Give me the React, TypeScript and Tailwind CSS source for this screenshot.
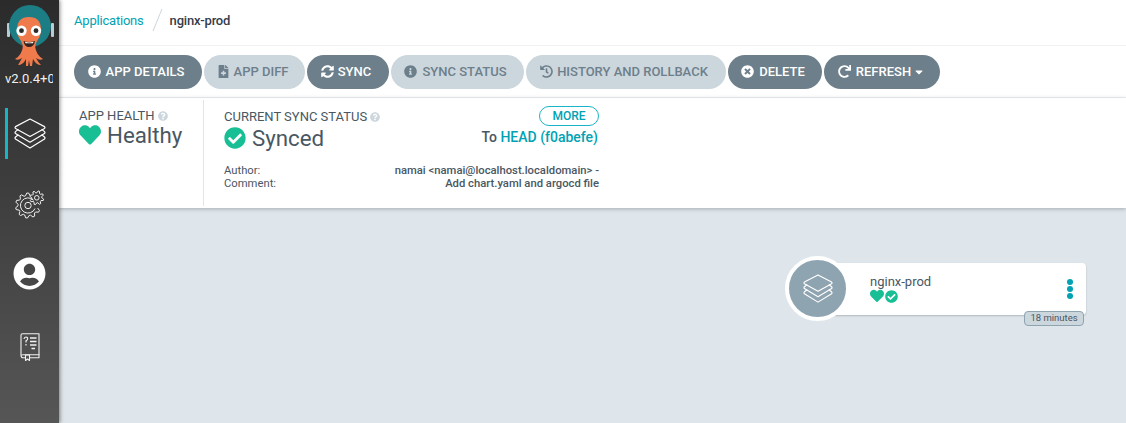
import { FaCaretDown, FaCheckCircle, FaFileMedical, FaHeart, FaHistory, FaInfoCircle, FaQuestionCircle, FaRedo, FaSyncAlt, FaTimesCircle, FaUserCircle } from "react-icons/fa";
import type { IconType } from "react-icons";

function Layers({ className }: { className?: string }) {
  return (
    <svg viewBox="-1 -1 32 32" fill="none" stroke="currentColor" strokeWidth="1.2" strokeLinejoin="round" strokeLinecap="round" className={className}>
      <path d="M15 0 L29.5 7.6 Q30.4 8.5 29.5 9.4 L15 17.5 L0.5 9.4 Q-0.4 8.5 0.5 7.6 Z" />
      <path d="M3 10.6 L0.5 12.6 Q-0.4 13.6 0.5 14.5 L15 23.2 L29.5 14.5 Q30.4 13.6 29.5 12.6 L27 10.6" />
      <path d="M3 16 L0.5 18 Q-0.4 19 0.5 20 L15 29 L29.5 20 Q30.4 19 29.5 18 L27 16" />
    </svg>
  );
}

// teeth outline for the settings icon, start/end in degrees so the big gear can stay open by the small one
function gearPath(cx: number, cy: number, outer: number, inner: number, teeth: number, start: number, end: number) {
  const pts: string[] = [];
  const step = (end - start) / teeth;
  for (let i = 0; i < teeth; i++) {
    const a = start + i * step;
    const offsets: [number, number][] = [[0, inner], [0.25, outer], [0.5, outer], [0.75, inner]];
    for (const [o, r] of offsets) {
      const t = ((a + o * step) * Math.PI) / 180;
      pts.push(`${(cx + r * Math.cos(t)).toFixed(2)} ${(cy + r * Math.sin(t)).toFixed(2)}`);
    }
  }
  return "M" + pts.join(" L");
}

function Gears({ className }: { className?: string }) {
  return (
    <svg viewBox="0 0 30 30" fill="none" stroke="currentColor" strokeWidth="1" strokeLinejoin="round" className={className}>
      <path d={gearPath(13, 15.5, 12.5, 10, 8, 15, 290)} />
      <path d="M18.5 10.2 A7.6 7.6 0 1 0 20 18.5" />
      <circle cx="13" cy="15.5" r="3.2" />
      <path d={gearPath(21.8, 7.8, 7, 5, 8, 0, 360) + " Z"} />
      <circle cx="21.8" cy="7.8" r="2.3" />
    </svg>
  );
}

function Book({ className }: { className?: string }) {
  return (
    <svg viewBox="0 0 20 28" fill="none" stroke="currentColor" strokeWidth="1.1" strokeLinejoin="round" className={className}>
      <path d="M1 22 L1 2 Q1 0.7 2.5 0.7 L19 0.7 L19 22" />
      <path d="M1 22 Q1 24.8 3 24.8 L5.5 24.8 M9.5 24.8 L19 24.8 L19 21.8 L3 21.8 Q1 21.8 1 23" />
      <path d="M5.5 22 L9.5 22 L9.5 27.5 L7.5 26 L5.5 27.5 Z" />
      <path d="M10 5 L16.5 5 M10 8.5 L16.5 8.5 M10 12 L16.5 12 M11.5 15.5 L15 15.5" strokeWidth="1.3" />
      <path d="M4 6 Q4.2 4 6 4 Q7.8 4.2 7.6 6 Q7.4 7.2 6 7.9 L6 9.6 M6 11 L6 12.4" strokeWidth="1.2" />
    </svg>
  );
}

function Logo() {
  return (
    <svg viewBox="5 4 50 64" className="h-[64px] w-[50px]">
      <rect x="7" y="23" width="3" height="14" rx="1" fill="#b6ccd6" />
      <rect x="51" y="23" width="3" height="14" rx="1" fill="#b6ccd6" />
      <circle cx="30" cy="26" r="21" fill="#1c7d85" />
      <path d="M17 30 Q17 17 29 17 Q41 17 41 30 Q41 36 37 41 Q35 45 35 48 L23 48 Q23 45 21 41 Q17 36 17 30 Z" fill="#ef7b4d" />
      <path d="M23 46 Q22 55 15 59 Q18 61 22 58 Q20 62 18 65 Q23 65 26 59 L26 66 L28 66 L29 60 L30 66 L32 66 L33 59 Q36 65 41 65 Q38 62 36 58 Q40 61 43 59 Q36 55 35 46 Z" fill="#ef7b4d" />
      <circle cx="21.5" cy="30.7" r="5.2" fill="#fff" />
      <circle cx="36" cy="30.7" r="5.2" fill="#fff" />
      <circle cx="21.5" cy="30.7" r="2.4" fill="#2b2b2b" />
      <circle cx="36" cy="30.7" r="2.4" fill="#2b2b2b" />
      <path d="M23.5 41 Q29 43 35 41 Q34 47 29 47 Q24.5 47 23.5 41 Z" fill="#33221f" />
      <path d="M25 41.8 Q29 43 33.5 41.8 L33 43.3 L25.5 43.3 Z" fill="#fff" />
    </svg>
  );
}

const actions: { label: string; icon: IconType; disabled?: boolean; width: string; caret?: boolean; gap: string; pad: string }[] = [
  { label: "APP DETAILS", icon: FaInfoCircle, width: "w-[128px]", gap: "gap-[5px]", pad: "pr-[4px]" },
  { label: "APP DIFF", icon: FaFileMedical, disabled: true, width: "w-[101px]", gap: "gap-[4px]", pad: "pr-[4px]" },
  { label: "SYNC", icon: FaSyncAlt, width: "w-[82px]", gap: "gap-[4px]", pad: "pr-[4px]" },
  { label: "SYNC STATUS", icon: FaInfoCircle, disabled: true, width: "w-[133px]", gap: "gap-[5px]", pad: "pr-[4px]" },
  { label: "HISTORY AND ROLLBACK", icon: FaHistory, disabled: true, width: "w-[200px]", gap: "gap-[4px]", pad: "pr-[4px]" },
  { label: "DELETE", icon: FaTimesCircle, width: "w-[94px]", gap: "gap-[5px]", pad: "pr-[4px]" },
  { label: "REFRESH", icon: FaRedo, width: "w-[116px]", caret: true, gap: "gap-[5px]", pad: "pr-[1px]" },
];

export default function App() {
  return (
    <div className="flex h-[423px] w-[1126px] overflow-hidden bg-[#dee6eb] font-['Roboto',sans-serif] text-[#495763]">
      <aside className="relative z-20 flex w-[59px] shrink-0 flex-col items-center bg-gradient-to-b from-[#2b2b2b] to-[#565656] shadow-[1px_0_4px_rgba(0,0,0,0.45)]">
        <div className="mt-[4px] self-start ml-[5px]">
          <Logo />
        </div>
        <div className="mt-[3px] ml-[5px] h-[16px] w-[48px] self-start overflow-hidden whitespace-nowrap text-[13px] leading-[16px] text-[#f0f0f0]">
          v2.0.4+0abefe
        </div>
        <div className="relative mt-[21px] flex h-[51px] w-full items-center justify-center">
          <div className="absolute left-[5px] top-0 h-[51px] w-[3px] bg-[#18b5c7]" />
          <Layers className="h-[32px] w-[32px] text-white" />
        </div>
        <Gears className="mt-[31px] h-[30px] w-[30px] text-[#f1f1f1]" />
        <FaUserCircle className="mt-[37px] text-[33px] text-white" />
        <Book className="mt-[43px] h-[28px] w-[20px] text-[#f1f1f1]" />
      </aside>

      <main className="flex min-w-0 flex-1 flex-col">
        <header className="flex h-[46px] shrink-0 items-center border-b border-[#eef2f4] bg-white pb-[5px] pl-[15px]">
          <span className="text-[13px] leading-none tracking-[-0.2px] text-[#00a2b3]">Applications</span>
          <span className="ml-[13px] mr-[12px] h-[24px] w-px rotate-[22deg] bg-[#ccd6dd]" />
          <span className="text-[13px] font-medium leading-none tracking-[-0.2px] text-[#363c4a]">nginx-prod</span>
        </header>

        <div className="flex h-[52px] shrink-0 items-center gap-[2px] border-b border-[#eef2f4] bg-white pl-[15px]">
          {actions.map((a) => (
            <button
              key={a.label}
              className={`flex h-[34px] items-center justify-center rounded-[17px] text-[13px] font-medium ${a.pad} ${a.gap} ${a.width} ${
                a.disabled ? "bg-[#ccd6dd] text-[#6d7f8b]" : "bg-[#6d7f8b] text-white"
              }`}
            >
              <a.icon className="text-[13px]" />
              <span className="flex items-center gap-[2px]">
                {a.label}
                {a.caret && <FaCaretDown className="text-[12px]" />}
              </span>
            </button>
          ))}
        </div>

        <section className="relative z-10 flex h-[110px] shrink-0 bg-white shadow-[0_1px_4px_rgba(0,0,0,0.25)]">
          <div className="mt-[2px] h-[106px] w-[145px] border-r border-[#dee6eb] pl-[20px] pt-[8px]">
            <div className="flex items-center gap-[3px] text-[13px] leading-[16px] text-[#495763]">
              APP HEALTH
              <FaQuestionCircle className="text-[10px] text-[#ccd6dd]" />
            </div>
            <div className="-mt-[1px] flex items-center gap-[6px] text-[22.3px] leading-[24px]">
              <FaHeart className="text-[22px] text-[#18be94]" />
              Healthy
            </div>
          </div>
          <div className="w-[395px] pl-[20px] pt-[8px]">
            <div className="flex justify-between">
              <div className="flex items-center gap-[3px] pt-[1px] text-[13px] leading-[16px]">
                CURRENT SYNC STATUS
                <FaQuestionCircle className="text-[10px] text-[#ccd6dd]" />
              </div>
              <button className="h-[20px] w-[60px] rounded-[10px] border border-[#18b5c7] text-[12px] font-medium leading-[17px] text-[#00a2b3]">
                MORE
              </button>
            </div>
            <div className="flex items-start justify-between">
              <div className="-mt-[2px] flex items-center gap-[6px] text-[22.3px] leading-[28px]">
                <FaCheckCircle className="text-[22px] text-[#18be94]" />
                Synced
              </div>
              <div className="pr-[1px] text-[14px] font-medium leading-[22px]">
                To <span className="text-[#00a2b3]">HEAD (f0abefe)</span>
              </div>
            </div>
            <div className="mt-[12px] flex justify-between text-[11.25px] leading-[13px]">
              <span>Author:</span>
              <span className="font-medium">namai &lt;namai@localhost.localdomain&gt; -</span>
            </div>
            <div className="flex justify-between text-[11.25px] leading-[13px]">
              <span>Comment:</span>
              <span className="font-medium">Add chart.yaml and argocd file</span>
            </div>
          </div>
        </section>

        <div className="relative flex-1">
          <div className="absolute left-[726px] top-[48px] z-10 flex h-[65px] w-[65px] items-center justify-center rounded-full border-[4px] border-white bg-[#8fa4b1]">
            <Layers className="h-[30px] w-[30px] text-white" />
          </div>
          <div className="absolute left-[770px] top-[55px] flex h-[52px] w-[257px] items-start justify-between rounded-r-[4px] bg-white pl-[41px] pr-[13px] shadow-[0_1px_2px_rgba(0,0,0,0.2)]">
            <div className="pt-[11px]">
              <div className="text-[13px] leading-[15px]">nginx-prod</div>
              <div className="flex items-center gap-[1px]">
                <FaHeart className="text-[14px] text-[#18be94]" />
                <FaCheckCircle className="text-[13px] text-[#18be94]" />
              </div>
            </div>
            <div className="mt-[16px] flex flex-col gap-[1px]">
              <span className="h-[6px] w-[6px] rounded-full bg-[#00a2b3]" />
              <span className="h-[6px] w-[6px] rounded-full bg-[#00a2b3]" />
              <span className="h-[6px] w-[6px] rounded-full bg-[#00a2b3]" />
            </div>
          </div>
          <div className="absolute left-[965px] top-[103px] z-10 flex h-[15px] w-[60px] items-center justify-center rounded-[4px] border border-[#8fa4b1] bg-[#ccd6dd] text-[9.5px] text-[#495763]">
            18 minutes
          </div>
        </div>
      </main>
    </div>
  );
}
